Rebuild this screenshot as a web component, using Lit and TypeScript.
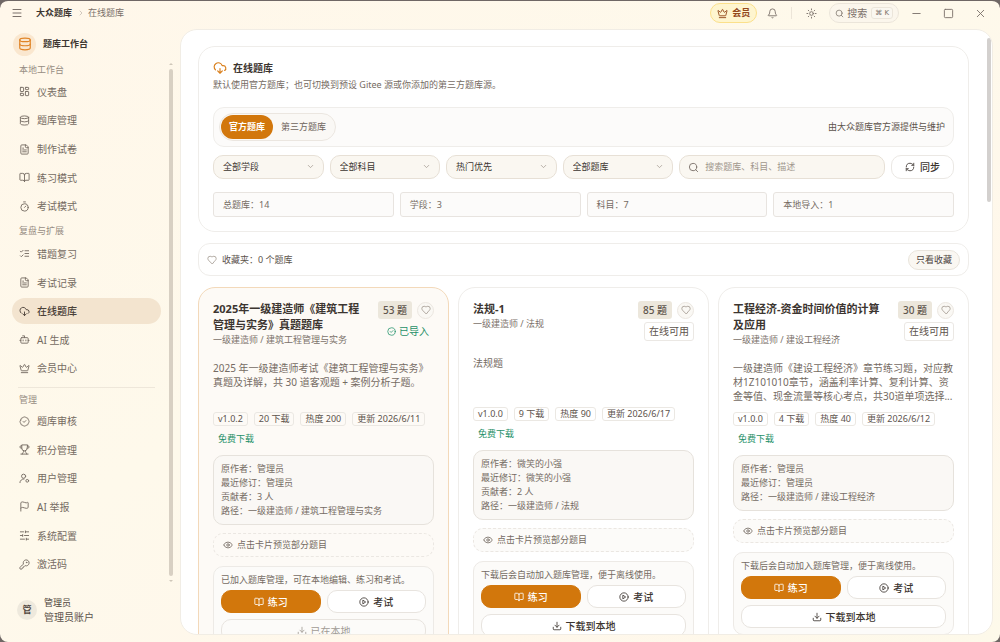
import { LitElement, html, css, svg, nothing } from "lit";
import { customElement, property } from "lit/decorators.js";

const icons: Record<string, unknown> = {
  menu: svg`<path d="M4 5h16M4 12h16M4 19h16"/>`,
  database: svg`<ellipse cx="12" cy="5" rx="9" ry="3"/><path d="M3 5v14a9 3 0 0 0 18 0V5"/><path d="M3 12a9 3 0 0 0 18 0"/>`,
  dashboard: svg`<rect x="3" y="3" width="7" height="9" rx="1"/><rect x="14" y="3" width="7" height="5" rx="1"/><rect x="14" y="12" width="7" height="9" rx="1"/><rect x="3" y="16" width="7" height="5" rx="1"/>`,
  file: svg`<path d="M15 2H6a2 2 0 0 0-2 2v16a2 2 0 0 0 2 2h12a2 2 0 0 0 2-2V7z"/><path d="M14 2v4a2 2 0 0 0 2 2h4M10 9H8M16 13H8M16 17H8"/>`,
  book: svg`<path d="M12 7v14M3 18a1 1 0 0 1-1-1V4a1 1 0 0 1 1-1h5a4 4 0 0 1 4 4 4 4 0 0 1 4-4h5a1 1 0 0 1 1 1v13a1 1 0 0 1-1 1h-6a3 3 0 0 0-3 3 3 3 0 0 0-3-3z"/>`,
  timer: svg`<path d="M10 2h4M12 14l3-3"/><circle cx="12" cy="14" r="8"/>`,
  checks: svg`<path d="m3 17 2 2 4-4M3 7l2 2 4-4M13 6h8M13 12h8M13 18h8"/>`,
  cloud: svg`<path d="M12 13v8l-4-4M12 21l4-4"/><path d="M4.393 15.269A7 7 0 1 1 15.71 8h1.79a4.5 4.5 0 0 1 2.436 8.284"/>`,
  bot: svg`<path d="M12 8V4H8"/><rect x="4" y="8" width="16" height="12" rx="2"/><path d="M2 14h2M20 14h2M15 13v2M9 13v2"/>`,
  crown: svg`<path d="M11.562 3.266a.5.5 0 0 1 .876 0L15.39 8.87a1 1 0 0 0 1.516.294L21.183 5.5a.5.5 0 0 1 .798.519l-2.834 10.246a1 1 0 0 1-.956.734H5.81a1 1 0 0 1-.957-.734L2.02 6.02a.5.5 0 0 1 .798-.519l4.276 3.664a1 1 0 0 0 1.516-.294z"/><path d="M5 21h14"/>`,
  badge: svg`<path d="M3.85 8.62a4 4 0 0 1 4.78-4.77 4 4 0 0 1 6.74 0 4 4 0 0 1 4.78 4.78 4 4 0 0 1 0 6.74 4 4 0 0 1-4.77 4.78 4 4 0 0 1-6.75 0 4 4 0 0 1-4.78-4.77 4 4 0 0 1 0-6.76z"/><path d="m9 12 2 2 4-4"/>`,
  trophy: svg`<path d="M6 9H4.5a2.5 2.5 0 0 1 0-5H6M18 9h1.500a2.500 2.500 0 0 0 0-5H18M4 22h16M10 14.660V17c0 .550-.470.980-.970 1.210C7.850 18.750 7 20.240 7 22M14 14.660V17c0 .550.470.980.970 1.210C16.150 18.750 17 20.240 17 22M18 2H6v7a6 6 0 0 0 12 0z"/>`,
  userCog: svg`<circle cx="10" cy="7" r="4.500"/><path d="M2 21a8 8 0 0 1 9-8"/><circle cx="18" cy="17" r="3"/>`,
  flag: svg`<path d="M4 22V4a1 1 0 0 1 .4-.8A6 6 0 0 1 8 2c3 0 5 2 7.333 2q2 0 3.067-.8A1 1 0 0 1 20 4v10a1 1 0 0 1-.4.8A6 6 0 0 1 16 16c-3 0-5-2-8-2a6 6 0 0 0-4 1.528"/>`,
  sliders: svg`<path d="M21 4h-7M10 4H3M21 12h-9M8 12H3M21 20h-5M12 20H3M14 2v4M8 10v4M16 18v4"/>`,
  key: svg`<path d="M2.586 17.414A2 2 0 0 0 2 18.828V21a1 1 0 0 0 1 1h3a1 1 0 0 0 1-1v-1a1 1 0 0 1 1-1h1a1 1 0 0 0 1-1v-1a1 1 0 0 1 1-1h.172a2 2 0 0 0 1.414-.586l.814-.814a6.500 6.500 0 1 0-4-4z"/><circle cx="16.500" cy="7.500" r=".7"/>`,
  bell: svg`<path d="M10.268 21a2 2 0 0 0 3.464 0M3.262 15.326A1 1 0 0 0 4 17h16a1 1 0 0 0 .740-1.673C19.410 13.956 18 12.499 18 8A6 6 0 0 0 6 8c0 4.499-1.411 5.956-2.738 7.326"/>`,
  sun: svg`<circle cx="12" cy="12" r="4"/><path d="M12 2v2M12 20v2M4.930 4.930l1.410 1.410M17.660 17.660l1.410 1.410M2 12h2M20 12h2M6.340 17.660l-1.410 1.410M19.070 4.930l-1.410 1.410"/>`,
  search: svg`<circle cx="11" cy="11" r="8"/><path d="m21 21-4.300-4.300"/>`,
  minus: svg`<path d="M4 12h16"/>`,
  square: svg`<rect x="3" y="3" width="18" height="18" rx="2"/>`,
  close: svg`<path d="M19 5 5 19M5 5l14 14"/>`,
  chevron: svg`<path d="m6 9 6 6 6-6"/>`,
  right: svg`<path d="m9 6 6 6-6 6"/>`,
  sync: svg`<path d="M3 12a9 9 0 0 1 9-9 9.750 9.750 0 0 1 6.740 2.740L21 8M21 3v5h-5M21 12a9 9 0 0 1-9 9 9.750 9.750 0 0 1-6.740-2.740L3 16M8 16H3v5"/>`,
  heart: svg`<path d="M19 14c1.490-1.460 3-3.210 3-5.500A5.500 5.500 0 0 0 16.500 3c-1.760 0-3 .5-4.500 2-1.500-1.500-2.740-2-4.500-2A5.500 5.500 0 0 0 2 8.500c0 2.300 1.500 4.050 3 5.500l7 7z"/>`,
  okCircle: svg`<circle cx="12" cy="12" r="10"/><path d="m8.500 12 2.500 2.500 5-5"/>`,
  eye: svg`<path d="M2.062 12.348a1 1 0 0 1 0-.696 10.750 10.750 0 0 1 19.876 0 1 1 0 0 1 0 .696 10.750 10.750 0 0 1-19.876 0"/><circle cx="12" cy="12" r="3"/>`,
  play: svg`<circle cx="12" cy="12" r="10"/><path d="m10 8 6 4-6 4z"/>`,
  download: svg`<path d="M21 15v4a2 2 0 0 1-2 2H5a2 2 0 0 1-2-2v-4M7 10l5 5 5-5M12 15V3"/>`,
};

const icon = (name: string, size = 12) =>
  html`<svg class="icon" width=${size} height=${size} viewBox="0 0 24 24" fill="none" stroke="currentColor"
    stroke-width="2" stroke-linecap="round" stroke-linejoin="round" aria-hidden="true">${icons[name]}</svg>`;

const base = css`
  * { box-sizing: border-box; }
  .icon { display: block; flex: none; }
  button, input, select { font: inherit; color: inherit; margin: 0; padding: 0; background: none; border: 0; }
  h1, h2, p, ul { margin: 0; padding: 0; }
  ul { list-style: none; }
`;

interface Bank {
  title: string; path: string; count: number; imported?: boolean; desc: string;
  tags: string[]; author: string; reviser: string; contributors?: number; fullPath: string;
}

const banks: Bank[] = [
  {
    title: "2025年一级建造师《建筑工程管理与实务》真题题库", path: "一级建造师 / 建筑工程管理与实务", count: 53, imported: true,
    desc: "2025 年一级建造师考试《建筑工程管理与实务》真题及详解，共 30 道客观题 + 案例分析子题。",
    tags: ["v1.0.2", "20 下载", "热度 200", "更新 2026/6/11"],
    author: "管理员", reviser: "管理员", contributors: 3, fullPath: "一级建造师 / 建筑工程管理与实务",
  },
  {
    title: "法规-1", path: "一级建造师 / 法规", count: 85, desc: "法规题",
    tags: ["v1.0.0", "9 下载", "热度 90", "更新 2026/6/17"],
    author: "微笑的小强", reviser: "微笑的小强", contributors: 2, fullPath: "一级建造师 / 法规",
  },
  {
    title: "工程经济-资金时间价值的计算及应用", path: "一级建造师 / 建设工程经济", count: 30,
    desc: "一级建造师《建设工程经济》章节练习题，对应教材1Z101010章节，涵盖利率计算、复利计算、资金等值、现金流量等核心考点，共30道单项选择...",
    tags: ["v1.0.0", "4 下载", "热度 40", "更新 2026/6/12"],
    author: "管理员", reviser: "管理员", fullPath: "一级建造师 / 建设工程经济",
  },
];

@customElement("bank-card")
export class BankCard extends LitElement {
  @property({ attribute: false }) bank!: Bank;

  static styles = [base, css`
    :host { display: block; min-width: 0; }
    .card { height: 100%; padding: 13px 14px; border: 1px solid #efedea; border-radius: 17px; background: #fff; }
    .card.imported { border-color: #f3d9ba; background: #fdfaf6; }
    .head { display: flex; justify-content: space-between; gap: 12px; }
    .names { flex: 1; min-width: 0; }
    .title { font-size: 11px; line-height: 16px; font-weight: 700; color: #3c3530; }
    .path { font-size: 9px; line-height: 13px; color: #7b716a; white-space: nowrap; }
    .marks { display: flex; flex-direction: column; align-items: flex-end; gap: 3px; }
    .top { display: flex; align-items: center; gap: 5px; }
    .count { padding: 0 5px; border-radius: 3px; background: #ece7dc; font-size: 10px; line-height: 18px; color: #5f564c; font-weight: 500; }
    .fav { width: 17px; height: 17px; display: grid; place-items: center; border: 1px solid #ece7e1; border-radius: 50%; background: #faf8f4; color: #a39a92; }
    .state { padding: 0 4px; border: 1px solid #ebe8e4; border-radius: 3px; font-size: 10px; line-height: 17px; color: #5c534c; }
    .state.done { display: flex; align-items: center; gap: 3px; border-color: transparent; color: #1f9068; }
    .desc { margin-top: 15px; min-height: 42px; font-size: 10px; line-height: 14px; color: #756b63; display: -webkit-box; -webkit-box-orient: vertical; -webkit-line-clamp: 3; overflow: hidden; }
    .tags { margin-top: 9px; display: flex; flex-wrap: wrap; gap: 6px; }
    .tag { padding: 0 4px; border: 1px solid #ebe8e3; border-radius: 3px; font-size: 9px; line-height: 12px; color: #5c534c; white-space: nowrap; }
    .tag.free { border-color: transparent; color: #1f9068; }
    .info { margin-top: 9px; padding: 6px 7px; border: 1px solid #e6e2dc; border-radius: 10px; background: #faf8f5; font-size: 9px; line-height: 14px; color: #756b63; }
    .preview { margin-top: 8px; height: 24px; padding: 0 9px; display: flex; align-items: center; gap: 4px; border: 1px dashed #ebe7e2; border-radius: 10px; background: #fcfbf9; font-size: 9px; color: #756b63; }
    .preview.imported { background: transparent; }
    .box { margin-top: 9px; padding: 6px 7px; border: 1px solid #edeae6; border-radius: 10px; background: #fcfbf9; }
    .hint { font-size: 9px; line-height: 14px; color: #756b63; white-space: nowrap; }
    .acts { margin-top: 3px; display: grid; grid-template-columns: 1fr 1fr; gap: 6px; }
    .btn { height: 23px; display: flex; align-items: center; justify-content: center; gap: 4px; border: 1px solid #e8e4df; border-radius: 10px; background: #fff; font-size: 10px; font-weight: 500; color: #3c3530; }
    .btn.primary { background: #d2770c; border-color: #d2770c; color: #fff; }
    .btn.wide { grid-column: 1 / -1; }
    .btn:disabled { color: #a19b95; background: transparent; font-weight: 400; }
  `];

  render() {
    const b = this.bank;
    const done = b.imported ? "imported" : "";
    return html`
      <article class="card ${done}">
        <div class="head">
          <div class="names">
            <h2 class="title">${b.title}</h2>
            <p class="path">${b.path}</p>
          </div>
          <div class="marks">
            <div class="top">
              <span class="count">${b.count} 题</span>
              <button class="fav" aria-label="收藏">${icon("heart", 10)}</button>
            </div>
            ${b.imported
              ? html`<span class="state done">${icon("okCircle", 9)}已导入</span>`
              : html`<span class="state">在线可用</span>`}
          </div>
        </div>
        <p class="desc">${b.desc}</p>
        <div class="tags">
          ${b.tags.map((t) => html`<span class="tag">${t}</span>`)}
          <span class="tag free">免费下载</span>
        </div>
        <div class="info">
          <p>原作者：${b.author}</p>
          <p>最近修订：${b.reviser}</p>
          ${b.contributors ? html`<p>贡献者：${b.contributors} 人</p>` : nothing}
          <p>路径：${b.fullPath}</p>
        </div>
        <div class="preview ${done}">${icon("eye", 10)}<span>点击卡片预览部分题目</span></div>
        <div class="box">
          <p class="hint">${b.imported ? "已加入题库管理，可在本地编辑、练习和考试。" : "下载后会自动加入题库管理，便于离线使用。"}</p>
          <div class="acts">
            <button class="btn primary">${icon("book", 10)}练习</button>
            <button class="btn">${icon("play", 10)}考试</button>
            <button class="btn wide" ?disabled=${!!b.imported}>${icon("download", 10)}${b.imported ? "已在本地" : "下载到本地"}</button>
          </div>
        </div>
      </article>`;
  }
}

type NavEntry = { label: string; divided?: boolean } | { icon: string; text: string; active?: boolean };

const nav: NavEntry[] = [
  { label: "本地工作台" },
  { icon: "dashboard", text: "仪表盘" },
  { icon: "database", text: "题库管理" },
  { icon: "file", text: "制作试卷" },
  { icon: "book", text: "练习模式" },
  { icon: "timer", text: "考试模式" },
  { label: "复盘与扩展" },
  { icon: "checks", text: "错题复习" },
  { icon: "file", text: "考试记录" },
  { icon: "cloud", text: "在线题库", active: true },
  { icon: "bot", text: "AI 生成" },
  { icon: "crown", text: "会员中心" },
  { label: "管理", divided: true },
  { icon: "badge", text: "题库审核" },
  { icon: "trophy", text: "积分管理" },
  { icon: "userCog", text: "用户管理" },
  { icon: "flag", text: "AI 举报" },
  { icon: "sliders", text: "系统配置" },
  { icon: "key", text: "激活码" },
];

@customElement("app-root")
export class AppRoot extends LitElement {
  static styles = [base, css`
    :host { display: block; height: 100vh; background: #6f6765; font-family: "Noto Sans", "Noto Sans CJK SC", sans-serif; font-size: 9px; line-height: 14px; color: #5c534c; }
    .window { height: 100%; display: flex; flex-direction: column; border-top: 1px solid #6f6765; border-radius: 8px; overflow: hidden; background: linear-gradient(150deg, #fff7ea 0%, #fef9eb 45%, #fff7eb 75%, #fdf9ea 100%); }
    .bar { flex: none; height: 28px; display: flex; align-items: center; padding: 0 14px 4px 11px; color: #7b716a; }
    .icon-btn { display: grid; place-items: center; }
    .crumbs { display: flex; align-items: center; gap: 3px; margin-left: 13px; flex: 1; font-size: 9px; }
    .crumbs .app { font-weight: 700; color: #3c3530; }
    .crumbs .sep { color: #b9b1a8; display: flex; margin-left: 2px; }
    .tools { display: flex; align-items: center; }
    .vip { height: 20px; padding: 0 6px; display: flex; align-items: center; gap: 4px; border: 1px solid #fbe08b; border-radius: 10px; background: #fef5cf; font-weight: 700; color: #93481b; }
    .bell { margin-left: 10px; }
    .rule { width: 1px; height: 12px; margin: 0 14px 0 13px; background: #ece5d8; }
    .find { height: 20px; margin-left: 12px; padding: 0 5px; display: flex; align-items: center; gap: 3px; border: 1px solid #ebe5da; border-radius: 10px; background: #fbf6ec; font-size: 10px; }
    .kbd { margin-left: 1px; padding: 0 3px; border: 1px solid #ebe5da; border-radius: 3px; background: #faf7f0; font-family: "DejaVu Sans", sans-serif; font-size: 7px; line-height: 10px; }
    .win { display: flex; gap: 21px; margin-left: 12px; }
    .body { flex: 1; min-height: 0; display: flex; padding: 0 7px 7px 0; }

    .side { flex: none; width: 180px; display: flex; flex-direction: column; padding: 4px 7px 10px 12px; }
    .brand { flex: none; display: flex; align-items: center; gap: 7px; height: 22px; padding-left: 1px; font-weight: 700; color: #3c3530; }
    .logo { width: 23px; height: 23px; display: grid; place-items: center; border-radius: 50%; background: #fae7cf; color: #e08426; }
    .scroll { flex: 1; min-height: 0; display: flex; gap: 8px; margin-top: 8px; }
    .nav { flex: 1; display: flex; flex-direction: column; gap: 3px; padding: 0 0 5px; }
    .label { flex: none; height: 13px; padding-left: 7px; line-height: 13px; color: #978d83; }
    .label.next { height: 16px; line-height: 18px; }
    .label.divided { height: 18px; margin: 3px 6px 0; padding-left: 1px; line-height: 24px; border-top: 1px solid #eee7da; }
    .item { flex: 1; display: flex; align-items: center; gap: 7px; padding-left: 7px; border-radius: 13px; font-size: 10px; color: #756b62; text-decoration: none; }
    .item.active { background: #f3e4cf; color: #4a4038; font-weight: 500; }
    .track { flex: none; width: 4px; display: flex; flex-direction: column; align-items: center; gap: 4px; }
    .thumb { flex: 1; width: 4px; border-radius: 2px; background: #d8d0c3; }
    .up, .down { border: 2px solid transparent; }
    .up { border-bottom-color: #cfc7ba; border-top: 0; }
    .down { border-top-color: #cfc7ba; border-bottom: 0; }
    .user { flex: none; display: flex; align-items: center; gap: 7px; height: 30px; margin-top: 13px; padding-left: 5px; }
    .avatar { width: 20px; height: 20px; border-radius: 50%; background: #eee9dd; text-align: center; line-height: 20px; font-weight: 700; color: #4d443c; }
    .user-name { color: #4d443c; }
    .user-role { font-size: 10px; }

    .main { flex: 1; min-width: 0; display: flex; border: 1px solid #f1ede5; border-radius: 17px; background: #fff; overflow: hidden; }
    .content { flex: 1; min-width: 0; padding: 16px 18px 0 17px; overflow: hidden; }
    .bar-y { flex: none; width: 4px; height: 164px; margin: 8px 1px 0 0; border-radius: 2px; background: #d3d0ce; }
    .panel { padding: 14px; border: 1px solid #efedea; border-radius: 17px; }
    .heading { display: flex; align-items: center; gap: 6px; }
    .heading h1 { font-size: 10px; line-height: 14px; font-weight: 700; color: #3c3530; }
    .heading .icon { color: #d97f1c; }
    .lead { margin-top: 3px; color: #756b63; }
    .source { margin-top: 15px; height: 40px; padding: 0 8px 0 5px; display: flex; align-items: center; justify-content: space-between; border: 1px solid #efedea; border-radius: 11px; background: #fcfbfa; }
    .tabs { display: flex; padding: 1px; border: 1px solid #ebe6e0; border-radius: 14px; background: #faf8f5; }
    .tab { height: 24px; padding: 0 8px; border-radius: 12px; color: #6e645c; }
    .tab.on { background: #d2770c; color: #fff; font-weight: 700; }
    .filters { margin-top: 8px; display: grid; grid-template-columns: repeat(4, 111fr) 207fr 63fr; gap: 6px; }
    .pick { position: relative; display: block; min-width: 0; }
    .pick select { width: 100%; height: 24px; padding: 0 9px; appearance: none; border: 1px solid #e7e0d6; border-radius: 10px; background: #faf7f1; color: #3c3530; }
    .pick .icon { position: absolute; right: 9px; top: 7px; color: #a39a90; pointer-events: none; }
    .query { height: 24px; min-width: 0; display: flex; align-items: center; gap: 6px; padding: 0 8px; border: 1px solid #e7e0d6; border-radius: 10px; background: #faf7f1; color: #7b716a; }
    .query input { flex: 1; min-width: 0; outline: 0; }
    .query input::placeholder { color: #a0968c; opacity: 1; }
    .sync { height: 24px; display: flex; align-items: center; justify-content: center; gap: 5px; border: 1px solid #ebe8e4; border-radius: 10px; font-size: 10px; font-weight: 500; color: #3c3530; }
    .stats { margin-top: 13px; display: grid; grid-template-columns: repeat(4, 1fr); gap: 6px; }
    .stat { height: 25px; padding: 0 9px; line-height: 24px; border: 1px solid #e8e4e0; border-radius: 3px; background: #fcfbfa; color: #756b63; }
    .favs { margin-top: 11px; height: 33px; padding: 0 8px; display: flex; align-items: center; gap: 5px; border: 1px solid #efedea; border-radius: 12px; }
    .favs .icon { color: #a39a92; }
    .favs .text { flex: 1; }
    .only { height: 20px; padding: 0 7px; border: 1px solid #e9e4dc; border-radius: 10px; background: #faf7f2; color: #4d443c; }
    .cards { margin-top: 11px; display: grid; grid-template-columns: repeat(3, 1fr); gap: 9px; }
  `];

  private picks = [["学段", "全部学段"], ["科目", "全部科目"], ["排序", "热门优先"], ["题库范围", "全部题库"]];
  private stats = ["总题库：14", "学段：3", "科目：7", "本地导入：1"];

  private navEntry(e: NavEntry, i: number) {
    if ("label" in e) {
      return html`<div class="label ${e.divided ? "divided" : i ? "next" : ""}">${e.label}</div>`;
    }
    return html`<a class="item ${e.active ? "active" : ""}" href="#">${icon(e.icon, 11)}<span>${e.text}</span></a>`;
  }

  render() {
    return html`
      <div class="window">
        <header class="bar">
          <button class="icon-btn" aria-label="菜单">${icon("menu", 12)}</button>
          <div class="crumbs"><span class="app">大众题库</span><span class="sep">${icon("right", 8)}</span><span>在线题库</span></div>
          <div class="tools">
            <button class="vip">${icon("crown", 11)}会员</button>
            <button class="icon-btn bell" aria-label="通知">${icon("bell", 11)}</button>
            <span class="rule"></span>
            <button class="icon-btn" aria-label="主题">${icon("sun", 11)}</button>
            <button class="find">${icon("search", 9)}搜索<span class="kbd">⌘ K</span></button>
            <div class="win">
              <button class="icon-btn" aria-label="最小化">${icon("minus", 11)}</button>
              <button class="icon-btn" aria-label="最大化">${icon("square", 11)}</button>
              <button class="icon-btn" aria-label="关闭">${icon("close", 11)}</button>
            </div>
          </div>
        </header>
        <div class="body">
          <aside class="side">
            <div class="brand"><span class="logo">${icon("database", 14)}</span>题库工作台</div>
            <div class="scroll">
              <nav class="nav">${nav.map((e, i) => this.navEntry(e, i))}</nav>
              <div class="track"><span class="up"></span><span class="thumb"></span><span class="down"></span></div>
            </div>
            <div class="user">
              <span class="avatar">管</span>
              <div><div class="user-name">管理员</div><div class="user-role">管理员账户</div></div>
            </div>
          </aside>
          <main class="main">
            <div class="content">
              <section class="panel">
                <div class="heading">${icon("cloud", 14)}<h1>在线题库</h1></div>
                <p class="lead">默认使用官方题库；也可切换到预设 Gitee 源或你添加的第三方题库源。</p>
                <div class="source">
                  <div class="tabs"><button class="tab on">官方题库</button><button class="tab">第三方题库</button></div>
                  <span>由大众题库官方源提供与维护</span>
                </div>
                <div class="filters">
                  ${this.picks.map(([name, value]) => html`<label class="pick"><select aria-label=${name}><option>${value}</option></select>${icon("chevron", 9)}</label>`)}
                  <label class="query">${icon("search", 11)}<input type="text" aria-label="搜索" placeholder="搜索题库、科目、描述"></label>
                  <button class="sync">${icon("sync", 10)}同步</button>
                </div>
                <div class="stats">${this.stats.map((s) => html`<div class="stat">${s}</div>`)}</div>
              </section>
              <section class="favs">${icon("heart", 10)}<span class="text">收藏夹：0 个题库</span><button class="only">只看收藏</button></section>
              <section class="cards">${banks.map((b) => html`<bank-card .bank=${b}></bank-card>`)}</section>
            </div>
            <div class="bar-y"></div>
          </main>
        </div>
      </div>`;
  }
}
